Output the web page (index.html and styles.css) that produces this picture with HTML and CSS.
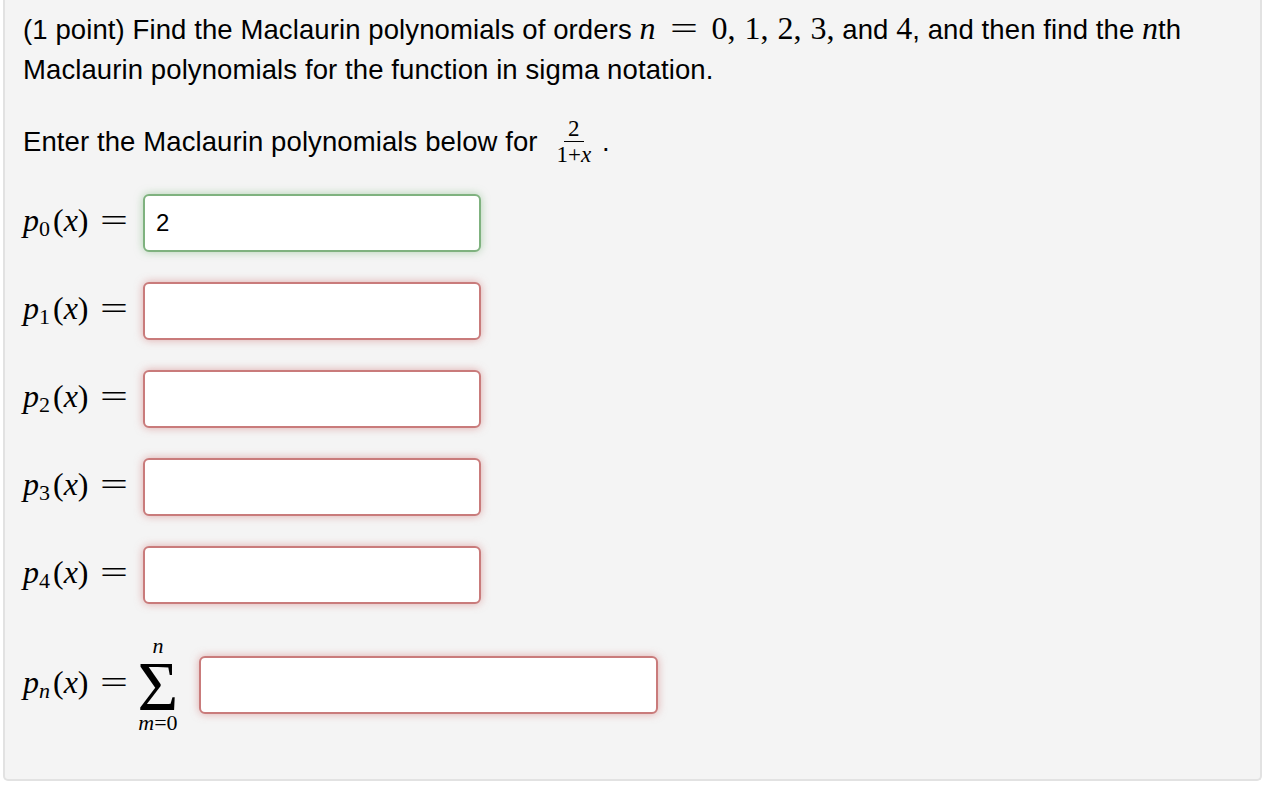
FILE: index.html
```html
<!DOCTYPE html>
<html>
<head>
<meta charset="utf-8">
<link rel="stylesheet" href="styles.css">
</head>
<body>
<div class="panel">
  <p class="q">(1 point) Find the Maclaurin polynomials of orders <span class="m"><i>n</i><span class="eq">=</span>0,<span class="th"></span>1,<span class="th"></span>2,<span class="th"></span>3,</span> and <span class="m">4</span>, and then find the <span class="m"><i>n</i></span>th<br>Maclaurin polynomials for the function in sigma notation.</p>
  <p class="q2">Enter the Maclaurin polynomials below for <span class="frac"><span class="num">2</span><span class="den">1+<i>x</i></span></span> .</p>
  <div class="rows">
    <div class="row"><span class="lbl"><i>p</i><sub>0</sub>(<i>x</i>)<span class="eq">=</span></span><input class="ans ok" type="text" value="2"></div>
    <div class="row"><span class="lbl"><i>p</i><sub>1</sub>(<i>x</i>)<span class="eq">=</span></span><input class="ans bad" type="text"></div>
    <div class="row"><span class="lbl"><i>p</i><sub>2</sub>(<i>x</i>)<span class="eq">=</span></span><input class="ans bad" type="text"></div>
    <div class="row"><span class="lbl"><i>p</i><sub>3</sub>(<i>x</i>)<span class="eq">=</span></span><input class="ans bad" type="text"></div>
    <div class="row"><span class="lbl"><i>p</i><sub>4</sub>(<i>x</i>)<span class="eq">=</span></span><input class="ans bad" type="text"></div>
    <div class="row sumrow">
      <span class="lbl auto"><i>p</i><sub><i>n</i></sub>(<i>x</i>)<span class="eq">=</span></span>
      <span class="sum"><span class="lim top"><i>n</i></span><span class="sig"><span class="sigch">&Sigma;</span></span><span class="lim bot"><i>m</i>=0</span></span>
      <input class="ans bad wide" type="text">
    </div>
  </div>
</div>
</body>
</html>
```

FILE: styles.css
```css
html, body {
  margin: 0;
  padding: 0;
  background: #ffffff;
}
body {
  width: 1276px;
  height: 786px;
  overflow: hidden;
  font-family: "Liberation Sans", Arial, sans-serif;
  color: #000;
}
.panel {
  margin-left: 3px;
  width: 1259px;
  height: 781px;
  box-sizing: border-box;
  background: #f4f4f4;
  border: 2px solid #e2e2e2;
  border-top: none;
  border-radius: 0 0 5px 5px;
  padding: 10px 0 0 18px;
}
.q, .q2 {
  margin: 0;
  font-size: 27.5px;
  line-height: 40px;
  letter-spacing: 0.1px;
}
.q2 {
  margin-top: 32px;
  height: 40px;
}
.m {
  font-family: "Liberation Serif", "Times New Roman", serif;
  font-size: 32px;
  line-height: 20px;
  letter-spacing: 0;
}
.th {
  display: inline-block;
  width: 9px;
}
.eq {
  display: inline-block;
  font-family: "Liberation Serif", "Times New Roman", serif;
  transform: scaleX(1.55);
  margin: 0 19px;
}
.frac {
  display: inline-flex;
  flex-direction: column;
  align-items: center;
  vertical-align: 15px;
  font-family: "Liberation Serif", "Times New Roman", serif;
  font-size: 23px;
  line-height: 20px;
  margin: -14px 0 -14px 8px;
}
.frac .num {
  padding: 0 4px 2px;
  border-bottom: 1.5px solid #000;
}
.frac .den {
  padding: 3px 3px 0;
}
.rows {
  margin-top: 32px;
  display: flex;
  flex-direction: column;
  gap: 30px;
}
.row {
  display: flex;
  align-items: center;
}
.sumrow {
  margin-top: 1px;
}
.lbl {
  width: 120px;
  flex: none;
  font-family: "Liberation Serif", "Times New Roman", serif;
  font-size: 32px;
  line-height: 40px;
  white-space: nowrap;
  position: relative;
  top: -3px;
}
.lbl.auto {
  width: auto;
}
.lbl sub {
  font-size: 22px;
  vertical-align: -5px;
  line-height: 0;
  margin-right: 3px;
}
.lbl .eq {
  margin: 0 0 0 16px;
}
.sum {
  display: inline-flex;
  flex-direction: column;
  align-items: center;
  font-family: "Liberation Serif", "Times New Roman", serif;
  margin-left: 15px;
  margin-right: 21px;
}
.lim {
  font-size: 22px;
  line-height: 22px;
}
.lim.bot {
  padding-top: 3px;
}
.sig {
  height: 52px;
  font-size: 70px;
  line-height: 52px;
}
.sigch {
  position: relative;
  top: 4px;
}
.ans {
  width: 338px;
  height: 58px;
  box-sizing: border-box;
  border-radius: 6px;
  background: #fff;
  font-family: "Liberation Sans", Arial, sans-serif;
  font-size: 24px;
  padding: 0 11px;
  margin: 0;
  outline: none;
  color: #000;
}
.ans.ok {
  border: 2px solid #7fb27f;
  box-shadow: 0 0 8px rgba(120, 180, 120, 0.55);
}
.ans.bad {
  border: 2px solid #c97b7b;
  box-shadow: 0 0 8px rgba(205, 110, 110, 0.55);
}
.ans.wide {
  width: 459px;
}
```
